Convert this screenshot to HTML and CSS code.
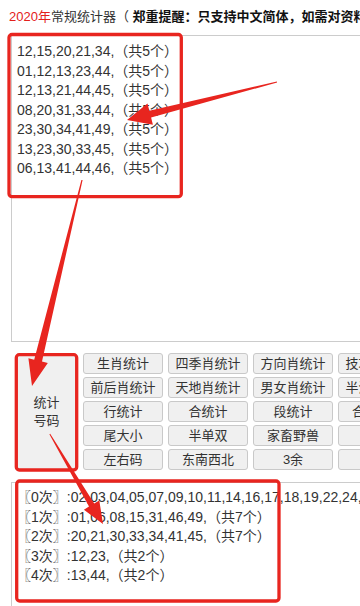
FILE: index.html
```html
<!DOCTYPE html>
<html lang="zh-CN">
<head>
  <meta charset="UTF-8">
  <meta name="viewport" content="width=device-width, initial-scale=1.0">
  <title>常规统计器</title>
  <link rel="stylesheet" href="styles.css">
</head>
<body>
  <div class="page">
    <p class="notice"><span class="year">2020年</span>常规统计器（ <b>郑重提醒：只支持中文简体，如需对资料进行繁简转换请先转换）</b></p>

    <!-- 输入的号码 -->
    <div class="box box-input">12,15,20,21,34,（共5个）
01,12,13,23,44,（共5个）
12,13,21,44,45,（共5个）
08,20,31,33,44,（共5个）
23,30,34,41,49,（共5个）
13,23,30,33,45,（共5个）
06,13,41,44,46,（共5个）</div>

    <!-- 统计按钮 -->
    <div class="tools">
      <button class="btn btn-main">统计<br>号码</button>
      <div class="grid">
        <button class="btn">生肖统计</button>
        <button class="btn">四季肖统计</button>
        <button class="btn">方向肖统计</button>
        <button class="btn">技巧肖统计</button>
        <button class="btn">五行统计</button>
        <button class="btn">前后肖统计</button>
        <button class="btn">天地肖统计</button>
        <button class="btn">男女肖统计</button>
        <button class="btn">半波肖统计</button>
        <button class="btn">波色统计</button>
        <button class="btn">行统计</button>
        <button class="btn">合统计</button>
        <button class="btn">段统计</button>
        <button class="btn">合数统计</button>
        <button class="btn">头统计</button>
        <button class="btn">尾大小</button>
        <button class="btn">半单双</button>
        <button class="btn">家畜野兽</button>
        <button class="btn">波色</button>
        <button class="btn">大小</button>
        <button class="btn">左右码</button>
        <button class="btn">东南西北</button>
        <button class="btn">3余</button>
        <button class="btn">4余</button>
        <button class="btn">5余</button>
      </div>
    </div>

    <!-- 统计结果 -->
    <div class="box box-output">〖0次〗:02,03,04,05,07,09,10,11,14,16,17,18,19,22,24,25,26,27,28,29,32,35,36,37,38,39,40,42,43,47,48,（共31个）
〖1次〗:01,06,08,15,31,46,49,（共7个）
〖2次〗:20,21,30,33,34,41,45,（共7个）
〖3次〗:12,23,（共2个）
〖4次〗:13,44,（共2个）</div>

    <!-- 红色标注 -->
    <svg class="marks" width="360" height="606" viewBox="0 0 360 606">
      <g fill="none" stroke="#e8251f" stroke-width="3.3">
        <rect x="9" y="34.5" width="172.3" height="162.2" rx="3"/>
        <rect x="16.3" y="354.7" width="60.4" height="115.3" rx="3"/>
        <rect x="16.7" y="481" width="262.3" height="120" rx="3"/>
      </g>
      <g fill="#e8251f">
        <polygon points="276.9,81.5 149.3,110.7 147.5,103.5 127,120 152.9,124.7 151.1,117.5 277.1,82.5"/>
        <polygon points="82.6,180.1 42,361.6 47.8,363.1 32,386 28.4,358.3 34.2,359.8 81.4,179.9"/>
        <polygon points="49.4,434.3 89,506.6 83.9,509.7 103,524 99.3,500.5 94.2,503.6 50.2,433.7"/>
      </g>
    </svg>
  </div>
</body>
</html>
```

FILE: styles.css
```css
body {
  margin: 0;
  font-family: "Liberation Sans", "Noto Sans CJK SC", sans-serif;
  color: #333;
  background: #fff;
}
.page {
  position: relative;
  width: 360px;
  height: 606px;
  overflow: hidden;
}
.notice {
  margin: 0;
  padding: 8px 0 0 9px;
  font-size: 13px;
  line-height: 18px;
  white-space: nowrap;
}
.year {
  color: #e3201b;
}
.notice b {
  color: #111;
}
.box {
  box-sizing: border-box;
  margin-left: 11px;
  width: 620px;
  border: 1px solid #ccc;
  padding: 6px 5px;
  font-size: 14px;
  line-height: 19.5px;
  white-space: pre;
  color: #333;
}
.box-input {
  margin-top: 9px;
  height: 307px;
}
.tools {
  display: flex;
  gap: 7px;
  margin: 11px 0 0 17px;
}
.btn {
  box-sizing: border-box;
  padding: 0;
  border: 1px solid #c9c9c9;
  border-radius: 3px;
  background: #f0f0f0;
  font-family: "Liberation Sans", "Noto Sans CJK SC", sans-serif;
  font-size: 13px;
  line-height: 18px;
  color: #333;
  white-space: nowrap;
}
.btn-main {
  width: 59px;
  height: 117px;
  flex: none;
}
.grid {
  display: grid;
  grid-template-columns: repeat(5, 80px);
  grid-auto-rows: 21px;
  gap: 3px 5px;
}
.box-output {
  margin-top: 12px;
  height: 200px;
  padding-top: 5px;
}
.marks {
  position: absolute;
  top: 0;
  left: 0;
  pointer-events: none;
}
```
